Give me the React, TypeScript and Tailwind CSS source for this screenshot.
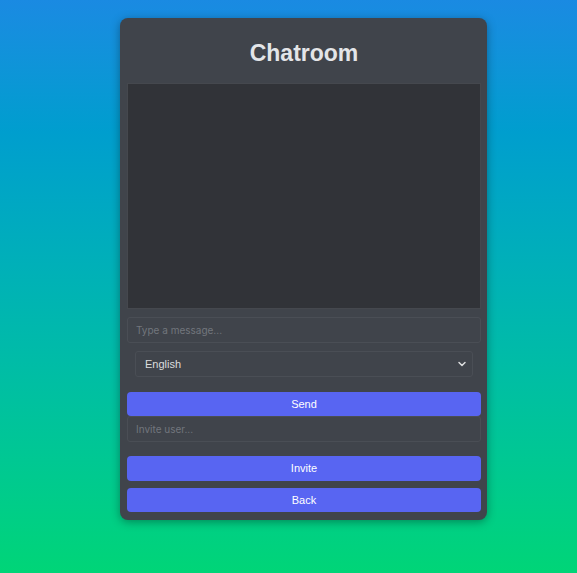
import { ChevronDown } from 'lucide-react';

export default function App() {
  return (
    <div className="min-h-[573px] w-full bg-gradient-to-b from-[#1a8ae2] to-[#00d577] pt-[18px] pb-[53px]">
      <div className="ml-[120px] w-[367px] rounded-lg bg-[#40444b] pl-[7px] pr-[6px] pt-[20px] pb-[8px] shadow-[0_2px_10px_rgba(0,0,0,0.35)]">
        <h1 className="mb-[15px] text-center font-['Liberation_Sans',Arial,sans-serif] text-[23px] font-bold leading-[30px] text-[#e3e5e8]">
          Chatroom
        </h1>

        <div className="h-[226px] border border-[#45484e] bg-[#313338]" />

        <input
          type="text"
          placeholder="Type a message..."
          className="mt-[8px] block h-[26px] w-full rounded-[3px] border border-[#4a4e55] bg-[#40444b] px-[8px] font-['Inter',sans-serif] text-[10px] text-[#dcddde] outline-none placeholder:text-[#72767d]"
        />

        <div className="relative mx-[8px] mt-[8px]">
          <select className="block h-[26px] w-full appearance-none rounded-[3px] border border-[#4a4e55] bg-[#40444b] px-[9px] font-['Liberation_Sans',Arial,sans-serif] text-[11px] text-[#dcddde] outline-none">
            <option>English</option>
          </select>
          <ChevronDown
            size={12}
            strokeWidth={3}
            className="pointer-events-none absolute right-[5px] top-[7px] text-[#dcddde]"
          />
        </div>

        <button className="mt-[15px] block h-[24px] w-full rounded-[4px] bg-[#5865f2] font-['Liberation_Sans',Arial,sans-serif] text-[11px] text-white">
          Send
        </button>

        <input
          type="text"
          placeholder="Invite user..."
          className="block h-[26px] w-full rounded-[3px] border border-[#4a4e55] bg-[#40444b] px-[8px] font-['Inter',sans-serif] text-[10px] text-[#dcddde] outline-none placeholder:text-[#72767d]"
        />

        <button className="mt-[14px] block h-[25px] w-full rounded-[4px] bg-[#5865f2] font-['Liberation_Sans',Arial,sans-serif] text-[11px] text-white">
          Invite
        </button>

        <button className="mt-[7px] block h-[24px] w-full rounded-[4px] bg-[#5865f2] font-['Liberation_Sans',Arial,sans-serif] text-[11px] text-white">
          Back
        </button>
      </div>
    </div>
  );
}
